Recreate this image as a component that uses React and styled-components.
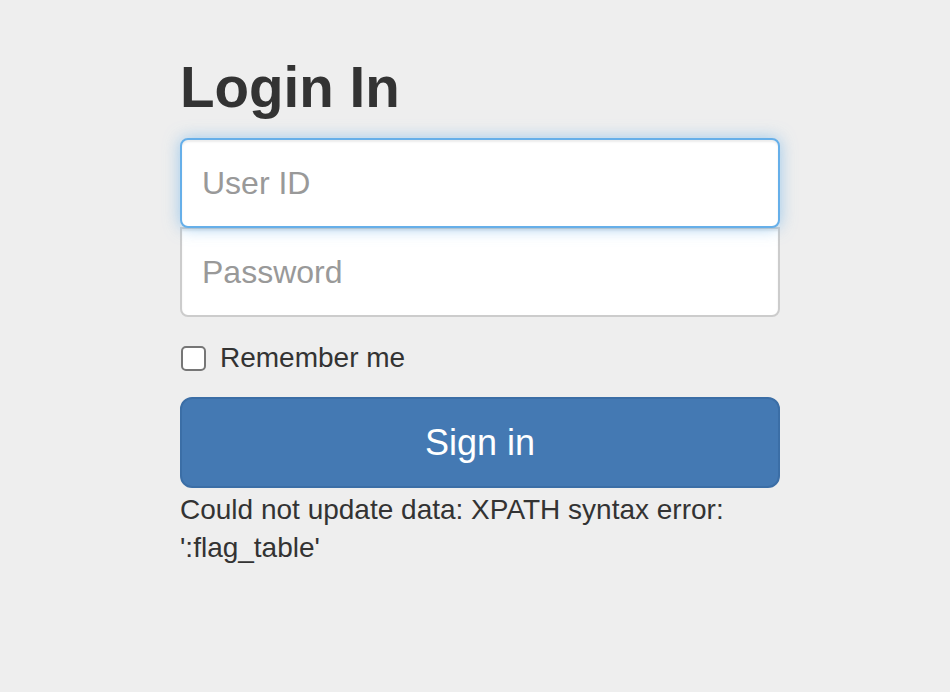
import styled, { createGlobalStyle } from 'styled-components';

const GlobalStyle = createGlobalStyle`
  html, body {
    margin: 0;
    padding: 0;
    background: #eeeeee;
  }
  body {
    font-family: "Liberation Sans", Helvetica, Arial, sans-serif;
    color: #333333;
    font-size: 28px;
  }
  * {
    box-sizing: border-box;
  }
`;

const App = () => {
  return (
    <>
      <GlobalStyle />
      <Page>
        <Form onSubmit={(e) => e.preventDefault()}>
          <Heading>Login In</Heading>
          <Field type="text" placeholder="User ID" $position="top" $focused />
          <Field type="password" placeholder="Password" $position="bottom" />
          <CheckRow>
            <Check type="checkbox" />
            <span>Remember me</span>
          </CheckRow>
          <SignIn type="submit">Sign in</SignIn>
          <Message>Could not update data: XPATH syntax error: ':flag_table'</Message>
        </Form>
      </Page>
    </>
  );
};

const Page = styled.div`
  padding: 57px 0 40px 180px;
  min-height: 692px;
`;

const Form = styled.form`
  width: 600px;
  display: flex;
  flex-direction: column;
`;

const Heading = styled.h2`
  margin: 0 0 19px;
  font-size: 56.5px;
  line-height: 1.1;
  font-weight: 700;
  color: #333333;
`;

const Field = styled.input`
  display: block;
  width: 100%;
  height: 90px;
  padding: 20px 20px;
  font-family: inherit;
  font-size: 32px;
  line-height: 1.42857;
  color: #555555;
  background: #ffffff;
  border: 2px solid ${(p) => (p.$focused ? '#66afe9' : '#cccccc')};
  border-radius: ${(p) => (p.$position === 'top' ? '8px' : '0 0 8px 8px')};
  margin-top: ${(p) => (p.$position === 'bottom' ? '-1px' : '0')};
  position: relative;
  z-index: ${(p) => (p.$focused ? 2 : 1)};
  outline: none;
  box-shadow: ${(p) =>
    p.$focused
      ? 'inset 0 2px 2px rgba(0,0,0,.075), 0 0 16px rgba(102,175,233,.6)'
      : 'inset 0 2px 2px rgba(0,0,0,.075)'};

  &::placeholder {
    color: #999999;
  }
`;

const CheckRow = styled.label`
  display: flex;
  align-items: center;
  gap: 14px;
  margin: 21px 0 19px;
  height: 40px;
  font-size: 28px;
  line-height: 40px;
  color: #333333;
`;

const Check = styled.input`
  appearance: none;
  -webkit-appearance: none;
  margin: 0 0 0 1px;
  width: 25px;
  height: 25px;
  border: 2px solid #767676;
  border-radius: 5px;
  background: #ffffff;
`;

const SignIn = styled.button`
  display: block;
  width: 100%;
  height: 91px;
  padding: 20px 32px;
  font-family: inherit;
  font-size: 36px;
  line-height: 1.3333;
  color: #ffffff;
  background: #4479b3;
  border: 2px solid #3b6ea6;
  border-radius: 12px;
  cursor: pointer;
`;

const Message = styled.div`
  margin-top: 3px;
  font-size: 28px;
  line-height: 38px;
  color: #333333;
`;

export default App;
